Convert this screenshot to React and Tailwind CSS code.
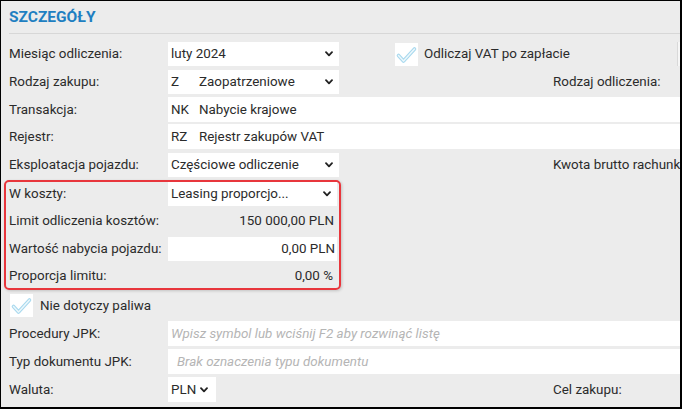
import React from "react";

function Chevron() {
  return (
    <svg width="8" height="6" viewBox="0 0 8 6" className="shrink-0">
      <path d="M1 1.2 L4 4.4 L7 1.2" fill="none" stroke="#222" strokeWidth="1.8" strokeLinecap="round" strokeLinejoin="round" />
    </svg>
  );
}

function Check() {
  return (
    <div className="w-[23px] h-[23px] bg-white flex items-center justify-center shrink-0">
      <svg width="23" height="23" viewBox="0 0 23 23">
        <path d="M3.5 12.5 L8.5 18 L19.5 6" fill="none" stroke="#a9d9ee" strokeWidth="3.6" strokeLinecap="round" strokeLinejoin="round" />
        <path d="M3.5 12.5 L8.5 18 L19.5 6" fill="none" stroke="#eef8fc" strokeWidth="1.4" strokeLinecap="round" strokeLinejoin="round" />
      </svg>
    </div>
  );
}

function Label({ children }) {
  return <div className="w-[159px] shrink-0 whitespace-nowrap">{children}</div>;
}

function Select({ children, w = "w-[171px]" }) {
  return (
    <div className={`${w} h-[24px] bg-white flex items-center justify-between pl-[3px] pr-[6px] shrink-0`}>
      <div className="flex items-center whitespace-nowrap">{children}</div>
      <Chevron />
    </div>
  );
}

export default function App() {
  return (
    <div className="w-[682px] h-[409px] overflow-hidden bg-[#ececec] border-t border-l border-r-2 border-b-2 border-black font-['Roboto',sans-serif] text-[13.4px] text-[#2b2b2b] leading-[20px]">
      <div className="h-[32px] pl-2 pt-[6px]">
        <div className="text-[15.5px] font-bold text-[#1f7fc1] leading-[20px]">SZCZEGÓŁY</div>
      </div>
      <div className="ml-2 h-px bg-[#d7d7d7]" />

      <div className="pl-2 pt-[8px] flex flex-col">
        {/* Row 1 */}
        <div className="flex items-center h-[24px]">
          <Label>Miesiąc odliczenia:</Label>
          <Select>luty 2024</Select>
          <div className="ml-[56px] flex items-center">
            <Check />
            <span className="ml-[6px] whitespace-nowrap">Odliczaj VAT po zapłacie</span>
          </div>
          <div className="ml-auto w-[3px] h-[24px] bg-[#f6f6f6] border-l border-[#d9d9d9]" />
        </div>

        {/* Row 2 */}
        <div className="flex items-center h-[24px] mt-[4px]">
          <Label>Rodzaj zakupu:</Label>
          <Select>
            <span className="w-[28px]">Z</span>
            <span>Zaopatrzeniowe</span>
          </Select>
          <span className="ml-[214px] whitespace-nowrap">Rodzaj odliczenia:</span>
        </div>

        {/* Row 3 */}
        <div className="flex items-center h-[25px] mt-[3px]">
          <Label>Transakcja:</Label>
          <div className="flex-1 h-[25px] bg-white flex items-center pl-[3px] whitespace-nowrap">
            <span className="w-[28px]">NK</span>
            <span>Nabycie krajowe</span>
          </div>
        </div>

        {/* Row 4 */}
        <div className="flex items-center h-[25px] mt-[2px]">
          <Label>Rejestr:</Label>
          <div className="flex-1 h-[25px] bg-white flex items-center pl-[3px] whitespace-nowrap">
            <span className="w-[28px]">RZ</span>
            <span>Rejestr zakupów VAT</span>
          </div>
        </div>

        {/* Row 5 */}
        <div className="flex items-center h-[24px] mt-[4px]">
          <Label>Eksploatacja pojazdu:</Label>
          <Select>Częściowe odliczenie</Select>
          <span className="ml-[214px] whitespace-nowrap">Kwota brutto rachunku:</span>
        </div>

        {/* Red box */}
        <div className="mt-[3px] -ml-[5px] w-[337px] h-[110px] border-2 border-[#e8363c] rounded-[5px] shadow-[1px_1px_3px_rgba(0,0,0,0.18)] pl-[3px] flex flex-col gap-[3.5px]">
          <div className="flex items-center h-[24px]">
            <Label>W koszty:</Label>
            <Select w="w-[169px]">Leasing proporcjo...</Select>
          </div>
          <div className="flex items-center h-[24px]">
            <Label>Limit odliczenia kosztów:</Label>
            <div className="w-[169px] text-right pr-[3px] whitespace-nowrap">150 000,00 PLN</div>
          </div>
          <div className="flex items-center h-[24px]">
            <Label>Wartość nabycia pojazdu:</Label>
            <div className="w-[169px] h-[24px] bg-white flex items-center justify-end pr-[2px] whitespace-nowrap">0,00 PLN</div>
          </div>
          <div className="flex items-center h-[24px]">
            <Label>Proporcja limitu:</Label>
            <div className="w-[169px] text-right pr-[4px] whitespace-nowrap">0,00 %</div>
          </div>
        </div>

        {/* Checkbox row */}
        <div className="flex items-center h-[23px] mt-[4px] pl-[1px]">
          <Check />
          <span className="ml-[7px] whitespace-nowrap">Nie dotyczy paliwa</span>
        </div>

        {/* Procedury JPK */}
        <div className="flex items-center h-[25px] mt-[4px]">
          <Label>Procedury JPK:</Label>
          <div className="flex-1 h-[25px] bg-white flex items-center pl-[3px] whitespace-nowrap italic text-[#b5b5b5]">
            Wpisz symbol lub wciśnij F2 aby rozwinąć listę
          </div>
        </div>

        {/* Typ dokumentu JPK */}
        <div className="flex items-center h-[25px] mt-[3px]">
          <Label>Typ dokumentu JPK:</Label>
          <div className="flex-1 h-[25px] bg-white flex items-center pl-[9px] whitespace-nowrap italic text-[#b5b5b5]">
            Brak oznaczenia typu dokumentu
          </div>
        </div>

        {/* Waluta */}
        <div className="flex items-center h-[25px] mt-[3px]">
          <Label>Waluta:</Label>
          <div className="w-[48px] h-[25px] bg-white flex items-center justify-between pl-[3px] pr-[8px] shrink-0">
            <span>PLN</span>
            <Chevron />
          </div>
          <span className="ml-[337px] whitespace-nowrap">Cel zakupu:</span>
        </div>
      </div>
    </div>
  );
}
